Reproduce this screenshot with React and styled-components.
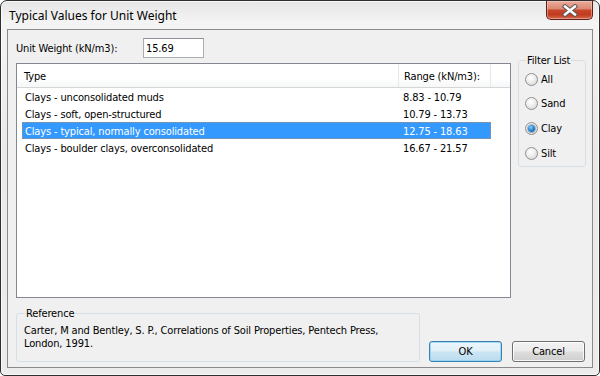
import React from 'react'
import styled, { createGlobalStyle } from 'styled-components';

const uiFont = `"DejaVu Sans Condensed", "Liberation Sans", sans-serif`;

const GlobalStyle = createGlobalStyle`
body {
    margin: 0;
    background: #ffffff;
    font-family: ${uiFont};
}
* {
    box-sizing: border-box;
}
`;

const Window = styled.div`
width: 600px;
height: 376px;
display: flex;
flex-direction: column;
padding: 0 6px 7px 6px;
border: 1px solid #2e2e2e;
border-radius: 7px 7px 5px 5px;
background: linear-gradient(180deg, #e6e6e6 0%, #f4f4f4 6%, #e9e9e9 40%, #ececec 100%);
box-shadow: inset 0 0 0 1px rgba(255, 255, 255, 0.75);
overflow: hidden;
`;

const TitleBar = styled.div`
height: 28px;
display: flex;
justify-content: space-between;
align-items: flex-start;
`;

const Title = styled.span`
padding: 7px 0 0 2px;
font-family: "Noto Sans", "Open Sans", sans-serif;
font-size: 12px;
line-height: 16px;
color: #000;
`;

const CloseButton = styled.div`
width: 47px;
height: 19px;
display: flex;
align-items: center;
justify-content: center;
border: 1px solid #5e1f16;
border-top: none;
border-radius: 0 0 5px 5px;
background: linear-gradient(180deg, #e9ab9b 0%, #dc8a74 42%, #c8462c 52%, #c23a1e 75%, #d4684c 100%);
box-shadow: inset 0 0 0 1px rgba(255, 220, 210, 0.45);
`;

const Client = styled.div`
flex: 1;
display: flex;
flex-direction: column;
gap: 9px;
padding: 8px 6px 5px 8px;
border: 1px solid #8a8a8a;
background: #f0f0f0;
font-size: 11px;
letter-spacing: -0.15px;
color: #000;
`;

const TopArea = styled.div`
height: 260px;
display: flex;
gap: 7px;
`;

const LeftColumn = styled.div`
width: 495px;
display: flex;
flex-direction: column;
gap: 5px;
`;

const WeightRow = styled.div`
height: 20px;
display: flex;
align-items: center;
`;

const Label = styled.span`
width: 127px;
`;

const ValueBox = styled.input`
width: 61px;
height: 20px;
padding: 0 2px;
border: 1px solid #abadb3;
border-top-color: #8e9197;
background: #fff;
font-family: ${uiFont};
font-size: 11px;
letter-spacing: -0.15px;
color: #000;
outline: none;
`;

const List = styled.div`
flex: 1;
display: flex;
flex-direction: column;
border: 1px solid #828790;
background: #fff;
`;

const Header = styled.div`
height: 24px;
display: flex;
border-bottom: 1px solid #d5d5d5;
background: linear-gradient(180deg, #ffffff 0%, #ffffff 60%, #f6f7f8 100%);
`;

const HeaderCell = styled.div`
width: ${({ width }) => width ? `${width}px` : 'auto'};
flex: ${({ width }) => width ? 'none' : 1};
display: flex;
align-items: center;
padding: 2px 0 0 ${({ indent }) => indent || 0}px;
border-right: ${({ width }) => width ? '1px solid #e3e8ee' : 'none'};
`;

const Rows = styled.div`
padding-left: 5px;
`;

const Row = styled.div`
width: 469px;
height: 17px;
display: grid;
grid-template-columns: 378px 1fr;
align-items: center;
padding: 1px 0 0 2px;
border: 1px dotted ${({ selected }) => selected ? 'rgba(214, 140, 70, 0.8)' : 'transparent'};
background: ${({ selected }) => selected ? '#3399ff' : 'transparent'};
color: ${({ selected }) => selected ? '#fff' : '#000'};
white-space: nowrap;
`;

const RightColumn = styled.div`
width: 68px;
padding-top: 16px;
`;

const Group = styled.fieldset`
margin: 0;
min-inline-size: 0;
width: ${({ width }) => width}px;
height: ${({ height }) => height}px;
padding: ${({ pad }) => pad};
border: 1px solid #d5dfe5;
border-radius: 3px;
`;

const Legend = styled.legend`
margin-left: ${({ shift }) => shift || 0}px;
padding: 0 1px;
font-size: 11px;
line-height: 13px;
`;

const RadioRow = styled.div`
height: 24.67px;
display: flex;
align-items: center;
gap: 3px;
margin-left: -1px;
`;

const RadioCircle = styled.span`
width: 13px;
height: 13px;
display: flex;
align-items: center;
justify-content: center;
border: 1px solid #8e8f8f;
border-radius: 50%;
background: radial-gradient(circle at 40% 35%, #ffffff 0%, #f0f0f0 40%, #cfcfcf 100%);

&::after {
    content: '';
    width: 7px;
    height: 7px;
    border-radius: 50%;
    display: ${({ checked }) => checked ? 'block' : 'none'};
    background: radial-gradient(circle at 40% 35%, #8fd0ff 0%, #2c8ad8 45%, #0f4d8c 100%);
    box-shadow: 0 0 0 1px rgba(30, 70, 110, 0.35);
}
`;

const BottomRow = styled.div`
height: 55px;
display: flex;
align-items: flex-end;
`;

const RefText = styled.div`
max-width: 380px;
line-height: 13px;
`;

const Buttons = styled.div`
display: flex;
gap: 10px;
margin-left: 9px;
`;

const Button = styled.div`
width: 73px;
height: 21px;
display: flex;
align-items: center;
justify-content: center;
border: 1px solid ${({ primary }) => primary ? '#3c7fb1' : '#707070'};
border-radius: 3px;
background: ${({ primary }) => primary
        ? 'linear-gradient(180deg, #edf6fb 0%, #e0eff8 48%, #cbe5f4 52%, #bcdcef 100%)'
        : 'linear-gradient(180deg, #f2f2f2 0%, #ebebeb 48%, #dddddd 52%, #cfcfcf 100%)'};
box-shadow: inset 0 0 0 1px ${({ primary }) => primary ? 'rgba(130, 210, 245, 0.7)' : 'rgba(255, 255, 255, 0.8)'};
`;

const types = [
    { name: 'Clays - unconsolidated muds', range: '8.83 - 10.79' },
    { name: 'Clays - soft, open-structured', range: '10.79 - 13.73' },
    { name: 'Clays - typical, normally consolidated', range: '12.75 - 18.63', selected: true },
    { name: 'Clays - boulder clays, overconsolidated', range: '16.67 - 21.57' },
];

const filters = ['All', 'Sand', 'Clay', 'Silt'];

const App = () => {
    return (
        <>
            <GlobalStyle />
            <Window>
                <TitleBar>
                    <Title>Typical Values for Unit Weight</Title>
                    <CloseButton>
                        <svg width="16" height="13" viewBox="0 0 16 13">
                            <path d="M3 2.5 L13 10.5 M13 2.5 L3 10.5" stroke="#5a5a5a" strokeWidth="4.4" strokeLinecap="square" />
                            <path d="M3 2.5 L13 10.5 M13 2.5 L3 10.5" stroke="#ffffff" strokeWidth="2.4" strokeLinecap="square" />
                        </svg>
                    </CloseButton>
                </TitleBar>
                <Client>
                    <TopArea>
                        <LeftColumn>
                            <WeightRow>
                                <Label>Unit Weight (kN/m3):</Label>
                                <ValueBox readOnly value="15.69" />
                            </WeightRow>
                            <List>
                                <Header>
                                    <HeaderCell width={382} indent={7}>Type</HeaderCell>
                                    <HeaderCell width={92} indent={5}>Range (kN/m3):</HeaderCell>
                                    <HeaderCell />
                                </Header>
                                <Rows>
                                    {types.map(t => (
                                        <Row key={t.name} selected={t.selected}>
                                            <span>{t.name}</span>
                                            <span>{t.range}</span>
                                        </Row>
                                    ))}
                                </Rows>
                            </List>
                        </LeftColumn>
                        <RightColumn>
                            <Group width={68} height={113} pad="0 0 2px 7px">
                                <Legend>Filter List</Legend>
                                {filters.map(f => (
                                    <RadioRow key={f}>
                                        <RadioCircle checked={f === 'Clay'} />
                                        {f}
                                    </RadioRow>
                                ))}
                            </Group>
                        </RightColumn>
                    </TopArea>
                    <BottomRow>
                        <Group width={404} height={55} pad="4px 6px 0 7px">
                            <Legend shift={1}>Reference</Legend>
                            <RefText>Carter, M and Bentley, S. P., Correlations of Soil Properties, Pentech Press, London, 1991.</RefText>
                        </Group>
                        <Buttons>
                            <Button primary>OK</Button>
                            <Button>Cancel</Button>
                        </Buttons>
                    </BottomRow>
                </Client>
            </Window>
        </>
    )
}

export default App
